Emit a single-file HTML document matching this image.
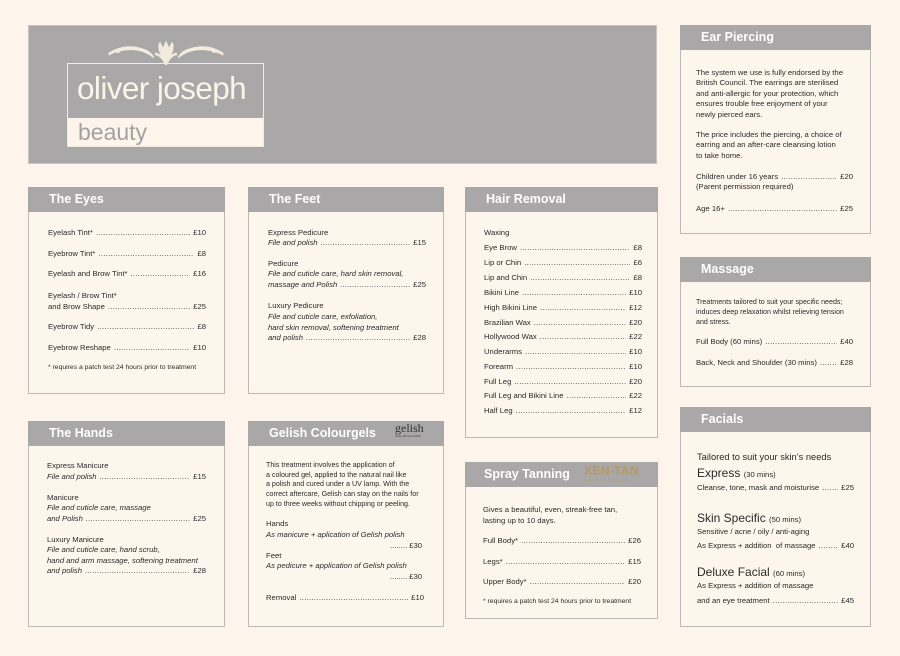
<!DOCTYPE html>
<html><head><meta charset="utf-8"><style>
*{margin:0;padding:0;box-sizing:border-box}
body{width:900px;height:656px;background:#fdf5eb;position:relative;overflow:hidden;font-family:"Liberation Sans",sans-serif;color:#2a2a2a}
.box{position:absolute;background:#fdf6ec;border:1px solid #bdb9b6}
.hd{position:absolute;left:-1px;right:-1px;top:-1px;height:25px;background:#a9a7a8;color:#fff;font-weight:bold;font-size:12.5px;line-height:25px;padding-left:21px}
.r,.t{position:absolute;font-size:7.7px;line-height:10px;white-space:nowrap}
.r{display:flex}
.r .f{flex:1;overflow:hidden;margin:0 3px;letter-spacing:0.3px}
.r .f::before{content:"...................................................................................................................................................."}
.i{font-style:italic}
</style></head><body>

<div class="box" style="left:28px;top:25px;width:629px;height:139px;background:#a9a7a8;border-color:#c8c4c0"></div>
<svg style="position:absolute;left:106px;top:41px" width="120" height="24" viewBox="0 0 120 24">
<g fill="#f3ebde" stroke="#f3ebde">
<path d="M3 12 Q20 1 40 9 Q46 12 48 17 Q36 7 20 9 Q10 10 3 14Z" stroke-width="0.8"/>
<path d="M117 12 Q100 1 80 9 Q74 12 72 17 Q84 7 100 9 Q110 10 117 14Z" stroke-width="0.8"/>
<circle cx="12" cy="10" r="1.5"/><circle cx="108" cy="10" r="1.5"/>
<path d="M60 23 L54 12 Q51 5 54 1 L57 7 L60 0 L63 7 L66 1 Q69 5 66 12Z" stroke-width="0.5"/>
<path d="M49 13 Q55 13 60 23 Q65 13 71 13" fill="none" stroke-width="2.5"/>
</g></svg>
<div style="position:absolute;left:67px;top:63px;width:197px;height:84px;border:1px solid #f3ebde"></div>
<div style="position:absolute;left:68px;top:118px;width:195px;height:28px;background:#fdf5eb"></div>
<div style="position:absolute;left:77px;top:66px;font-size:31.5px;color:#fbf4e8;letter-spacing:-0.6px;line-height:44px">oliver joseph</div>
<div style="position:absolute;left:78px;top:117px;font-size:23px;color:#a3a1a2;line-height:30px">beauty</div>

<!-- Ear piercing -->
<div class="box" style="left:680px;top:25px;width:191px;height:209px"><div class="hd">Ear Piercing</div></div>
<div class="t" style="left:696px;top:68px;line-height:10.4px">The system we use is fully endorsed by the<br>British Council. The earrings are sterilised<br>and anti-allergic for your protection, which<br>ensures trouble free enjoyment of your<br>newly pierced ears.</div>
<div class="t" style="left:696px;top:130px;line-height:10.4px">The price includes the piercing, a choice of<br>earring and an after-care cleansing lotion<br>to take home.</div>
<div class="r" style="left:696px;top:172px;width:157px"><span>Children under 16 years</span><span class="f"></span><span>£20</span></div>
<div class="t" style="left:696px;top:182px">(Parent permission required)</div>
<div class="r" style="left:696px;top:204px;width:157px"><span>Age 16+</span><span class="f"></span><span>£25</span></div>

<!-- Massage -->
<div class="box" style="left:680px;top:257px;width:191px;height:130px"><div class="hd">Massage</div></div>
<div class="t" style="left:696px;top:297px;font-size:7.1px;line-height:10px">Treatments tailored to suit your specific needs;<br>induces deep relaxation whilst relieving tension<br>and stress.</div>
<div class="r" style="left:696px;top:337px;width:157px"><span>Full Body (60 mins)</span><span class="f"></span><span>£40</span></div>
<div class="r" style="left:696px;top:358px;width:157px"><span>Back, Neck and Shoulder (30 mins)</span><span class="f"></span><span>£28</span></div>

<!-- Facials -->
<div class="box" style="left:680px;top:407px;width:191px;height:220px"><div class="hd">Facials</div></div>
<div class="t" style="left:697px;top:451px;font-size:9.3px;line-height:12px">Tailored to suit your skin’s needs</div>
<div class="t" style="left:697px;top:466px;font-size:12px;line-height:14px">Express <span style="font-size:7.7px">(30 mins)</span></div>
<div class="r" style="left:697px;top:483px;width:157px"><span>Cleanse, tone, mask and moisturise</span><span class="f"></span><span>£25</span></div>
<div class="t" style="left:697px;top:511px;font-size:12px;line-height:14px">Skin Specific <span style="font-size:7.7px">(50 mins)</span></div>
<div class="t" style="left:697px;top:527px">Sensitive / acne / oily / anti-aging</div>
<div class="r" style="left:697px;top:541px;width:157px"><span>As Express + addition &nbsp;of massage</span><span class="f"></span><span>£40</span></div>
<div class="t" style="left:697px;top:565px;font-size:12px;line-height:14px">Deluxe Facial <span style="font-size:7.7px">(60 mins)</span></div>
<div class="t" style="left:697px;top:581px">As Express + addition of massage</div>
<div class="r" style="left:697px;top:596px;width:157px"><span>and an eye treatment</span><span class="f"></span><span>£45</span></div>

<!-- Eyes -->
<div class="box" style="left:28px;top:187px;width:197px;height:207px"><div class="hd">The Eyes</div></div>
<div class="r" style="left:48px;top:228px;width:158px"><span>Eyelash Tint*</span><span class="f"></span><span>£10</span></div>
<div class="r" style="left:48px;top:249px;width:158px"><span>Eyebrow Tint*</span><span class="f"></span><span>£8</span></div>
<div class="r" style="left:48px;top:269px;width:158px"><span>Eyelash and Brow Tint*</span><span class="f"></span><span>£16</span></div>
<div class="t" style="left:48px;top:291px">Eyelash / Brow Tint*</div>
<div class="r" style="left:48px;top:302px;width:158px"><span>and Brow Shape</span><span class="f"></span><span>£25</span></div>
<div class="r" style="left:48px;top:322px;width:158px"><span>Eyebrow Tidy</span><span class="f"></span><span>£8</span></div>
<div class="r" style="left:48px;top:343px;width:158px"><span>Eyebrow Reshape</span><span class="f"></span><span>£10</span></div>
<div class="t" style="left:48px;top:363px;font-size:6.8px">* requires a patch test 24 hours prior to treatment</div>

<!-- Feet -->
<div class="box" style="left:248px;top:187px;width:196px;height:207px"><div class="hd">The Feet</div></div>
<div class="t" style="left:268px;top:228px">Express Pedicure</div>
<div class="r i" style="left:268px;top:238px;width:158px"><span>File and polish</span><span class="f"></span><span style="font-style:normal">£15</span></div>
<div class="t" style="left:268px;top:259px">Pedicure</div>
<div class="t i" style="left:268px;top:269px">File and cuticle care, hard skin removal,</div>
<div class="r i" style="left:268px;top:280px;width:158px"><span>massage and Polish</span><span class="f"></span><span style="font-style:normal">£25</span></div>
<div class="t" style="left:268px;top:301px">Luxury Pedicure</div>
<div class="t i" style="left:268px;top:312px;line-height:10.5px">File and cuticle care, exfoliation,<br>hard skin removal, softening treatment</div>
<div class="r i" style="left:268px;top:333px;width:158px"><span>and polish</span><span class="f"></span><span style="font-style:normal">£28</span></div>

<!-- Hair removal -->
<div class="box" style="left:465px;top:187px;width:193px;height:251px"><div class="hd">Hair Removal</div></div>
<div class="t" style="left:484px;top:228px">Waxing</div>
<div class="r" style="left:484px;top:243px;width:158px"><span>Eye Brow</span><span class="f"></span><span>£8</span></div>
<div class="r" style="left:484px;top:258px;width:158px"><span>Lip or Chin</span><span class="f"></span><span>£6</span></div>
<div class="r" style="left:484px;top:273px;width:158px"><span>Lip and Chin</span><span class="f"></span><span>£8</span></div>
<div class="r" style="left:484px;top:288px;width:158px"><span>Bikini Line</span><span class="f"></span><span>£10</span></div>
<div class="r" style="left:484px;top:303px;width:158px"><span>High Bikini Line</span><span class="f"></span><span>£12</span></div>
<div class="r" style="left:484px;top:318px;width:158px"><span>Brazilian Wax</span><span class="f"></span><span>£20</span></div>
<div class="r" style="left:484px;top:332px;width:158px"><span>Hollywood Wax</span><span class="f"></span><span>£22</span></div>
<div class="r" style="left:484px;top:347px;width:158px"><span>Underarms</span><span class="f"></span><span>£10</span></div>
<div class="r" style="left:484px;top:362px;width:158px"><span>Forearm</span><span class="f"></span><span>£10</span></div>
<div class="r" style="left:484px;top:377px;width:158px"><span>Full Leg</span><span class="f"></span><span>£20</span></div>
<div class="r" style="left:484px;top:391px;width:158px"><span>Full Leg and Bikini Line</span><span class="f"></span><span>£22</span></div>
<div class="r" style="left:484px;top:406px;width:158px"><span>Half Leg</span><span class="f"></span><span>£12</span></div>

<!-- Hands -->
<div class="box" style="left:28px;top:421px;width:197px;height:206px"><div class="hd">The Hands</div></div>
<div class="t" style="left:47px;top:461px">Express Manicure</div>
<div class="r i" style="left:47px;top:472px;width:159px"><span>File and polish</span><span class="f"></span><span style="font-style:normal">£15</span></div>
<div class="t" style="left:47px;top:493px">Manicure</div>
<div class="t i" style="left:47px;top:503px">File and cuticle care, massage</div>
<div class="r i" style="left:47px;top:514px;width:159px"><span>and Polish</span><span class="f"></span><span style="font-style:normal">£25</span></div>
<div class="t" style="left:47px;top:535px">Luxury Manicure</div>
<div class="t i" style="left:47px;top:545px;line-height:10.5px">File and cuticle care, hand scrub,<br>hand and arm massage, softening treatment</div>
<div class="r i" style="left:47px;top:566px;width:159px"><span>and polish</span><span class="f"></span><span style="font-style:normal">£28</span></div>

<!-- Gelish -->
<div class="box" style="left:248px;top:421px;width:196px;height:206px"><div class="hd">Gelish Colourgels</div></div>
<div style="position:absolute;left:395px;top:421px;font-family:'Liberation Serif',serif;font-size:12px;color:#333;line-height:14px">gelish</div>
<div style="position:absolute;left:395px;top:434px;font-size:3px;color:#444">Soak-off Gel Polish</div>
<div class="t" style="left:266px;top:461px;font-size:7.1px;line-height:9.7px">This treatment involves the application of<br>a coloured gel, applied to the natural nail like<br>a polish and cured under a UV lamp. With the<br>correct aftercare, Gelish can stay on the nails for<br>up to three weeks without chipping or peeling.</div>
<div class="t" style="left:266px;top:519px">Hands</div>
<div class="t i" style="left:266px;top:530px">As manicure + aplication of Gelish polish</div>
<div class="t" style="left:390px;top:541px">........ £30</div>
<div class="t" style="left:266px;top:551px">Feet</div>
<div class="t i" style="left:266px;top:561px">As pedicure + application of Gelish polish</div>
<div class="t" style="left:390px;top:572px">........ £30</div>
<div class="r" style="left:266px;top:593px;width:158px"><span>Removal</span><span class="f"></span><span>£10</span></div>

<!-- Spray -->
<div class="box" style="left:465px;top:462px;width:193px;height:157px"><div class="hd" style="padding-left:19px">Spray Tanning</div></div>
<div style="position:absolute;left:584px;top:463px;font-weight:bold;font-size:12.5px;color:#b49a6a;line-height:16px">XEN-TAN</div>
<div style="position:absolute;left:584px;top:478px;font-size:3px;color:#b49a6a;letter-spacing:0.6px">FEEL GOOD ALL OVER</div>
<div class="t" style="left:483px;top:505px;line-height:10.5px">Gives a beautiful, even, streak-free tan,<br>lasting up to 10 days.</div>
<div class="r" style="left:483px;top:536px;width:158px"><span>Full Body*</span><span class="f"></span><span>£26</span></div>
<div class="r" style="left:483px;top:557px;width:158px"><span>Legs*</span><span class="f"></span><span>£15</span></div>
<div class="r" style="left:483px;top:577px;width:158px"><span>Upper Body*</span><span class="f"></span><span>£20</span></div>
<div class="t" style="left:483px;top:597px;font-size:6.8px">* requires a patch test 24 hours prior to treatment</div>

</body></html>
